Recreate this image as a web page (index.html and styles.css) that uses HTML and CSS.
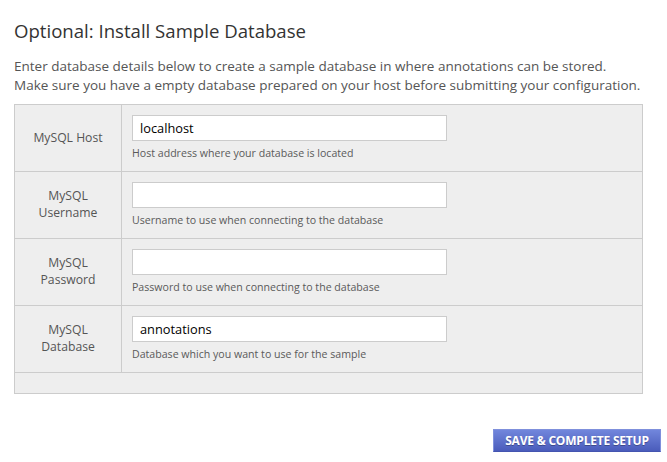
FILE: index.html
```html
<!DOCTYPE html>
<html>
<head>
<meta charset="utf-8">
<link rel="stylesheet" href="styles.css">
</head>
<body>
<div class="page">
  <h1 class="title">Optional: Install Sample Database</h1>
  <p class="intro">Enter database details below to create a sample database in where annotations can be stored.<br>Make sure you have a empty database prepared on your host before submitting your configuration.</p>
  <table class="form">
    <colgroup><col class="c-label"><col class="c-field"></colgroup>
    <tr>
      <th class="label">MySQL Host</th>
      <td class="field"><input class="text" type="text" value="localhost"><div class="help">Host address where your database is located</div></td>
    </tr>
    <tr>
      <th class="label">MySQL<br>Username</th>
      <td class="field"><input class="text" type="text" value=""><div class="help">Username to use when connecting to the database</div></td>
    </tr>
    <tr>
      <th class="label">MySQL<br>Password</th>
      <td class="field"><input class="text" type="text" value=""><div class="help">Password to use when connecting to the database</div></td>
    </tr>
    <tr>
      <th class="label">MySQL<br>Database</th>
      <td class="field"><input class="text" type="text" value="annotations"><div class="help">Database which you want to use for the sample</div></td>
    </tr>
    <tr class="foot"><td colspan="2"></td></tr>
  </table>
  <div class="actions"><button class="btn" type="button">SAVE &amp; COMPLETE SETUP</button></div>
</div>
</body>
</html>
```
FILE: styles.css
```css
html, body { margin: 0; padding: 0; background: #fff; }
body { font-family: "Open Sans", "DejaVu Sans", sans-serif; color: #555; }
.page { padding: 0 6px 0 14px; }
.title { margin: 0; padding-top: 19px; font-size: 18.6px; font-weight: normal; line-height: 24px; color: #333; }
.intro { margin: 14px 0 0; font-size: 13.5px; line-height: 19px; color: #555; }
.form { margin-top: 9px; width: 629px; border-collapse: collapse; table-layout: fixed; background: #eee; }
.c-label { width: 107px; }
.form th, .form td { border: 1px solid #ccc; }
.label { font-weight: normal; font-size: 12.2px; line-height: 16.6px; color: #555; text-align: center; vertical-align: middle; padding: 0 6px; }
.field { padding: 10px; vertical-align: top; height: 46px; }
.text { display: block; box-sizing: border-box; width: 315px; height: 26px; margin: 0; border: 1px solid #ccc; background: #fff; padding: 0 7px; font-family: "Open Sans", "DejaVu Sans", sans-serif; font-size: 12.8px; color: #000; outline: none; }
.help { margin-top: 5px; font-size: 10.6px; line-height: 14px; color: #5a5a5a; }
.foot td { height: 20px; padding: 0; }
.actions { display: flex; justify-content: flex-end; margin-top: 35px; }
.btn { height: 23px; width: 168px; padding: 0; border: 1px solid #7f90dc; border-bottom-color: #4455b0; background: linear-gradient(#7186dc, #4a5cbb); color: #fff; font-family: "Open Sans", "DejaVu Sans", sans-serif; font-weight: bold; font-size: 12px; text-shadow: 0 1px 0 rgba(0,0,0,0.3); letter-spacing: -0.2px; }
```
